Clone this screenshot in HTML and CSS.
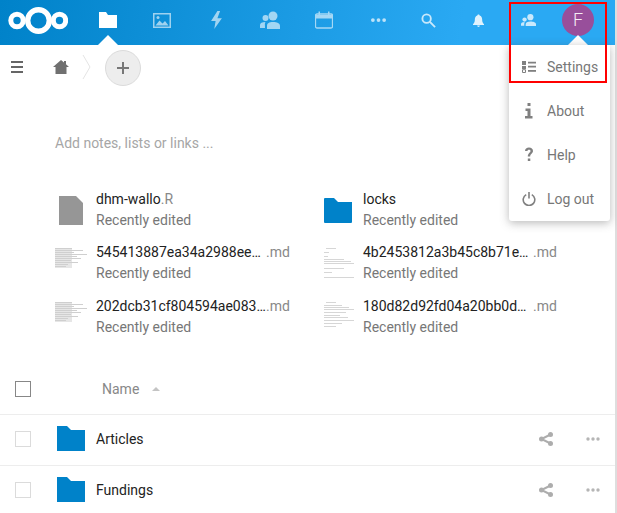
FILE: index.html
```html
<!DOCTYPE html>
<html lang="en">
  <head>
    <meta charset="UTF-8" />
    <title>Files</title>
    <link rel="stylesheet" href="styles.css">
  </head>
  <body>
    <header class="topbar">
      <svg class="logo" viewBox="0 0 60 27" width="60" height="27">
        <g fill="none" stroke="#fff">
          <circle cx="9" cy="13.500" r="6.200" stroke-width="5" />
          <circle cx="30.500" cy="13.500" r="10.800" stroke-width="5.400" />
          <circle cx="51.500" cy="13.500" r="6.200" stroke-width="5" />
        </g>
      </svg>

      <nav class="apps">
        <a class="app active">
          <svg viewBox="0 0 18 16" width="18" height="16"><path d="M0 0h7l2 3h9v13H0z" fill="#fff" /></svg>
        </a>
        <a class="app">
          <svg viewBox="0 0 18 16" width="18" height="16"><path d="M0 1h18v15H0zM1.500 2.500v12h15v-12z" fill="#fff" fill-rule="evenodd" /><path d="M2.500 13.500l4-5 3 3 2.500-2.500 3.500 4.500z" fill="#fff" /><circle cx="5" cy="5.500" r="1.500" fill="#fff" /></svg>
        </a>
        <a class="app">
          <svg viewBox="0 0 14 20" width="13" height="18"><path d="M8 0L1 11h5l-1.500 9L13 8H8l3-8z" fill="#fff" /></svg>
        </a>
        <a class="app">
          <svg viewBox="0 0 20 18" width="20" height="18"><circle cx="13" cy="5" r="4.500" fill="#fff" /><circle cx="5.500" cy="7" r="3" fill="#fff" /><path d="M7 18v-3c0-3 2-4 6-4s7 1 7 4v3zM0 17v-3c0-2 2-3 5.500-3-1 1-.5 3-.5 6z" fill="#fff" /></svg>
        </a>
        <a class="app">
          <svg viewBox="0 0 18 18" width="18" height="18"><path d="M2 3h14a1.500 1.500 0 0 1 1.500 1.500v11A1.500 1.500 0 0 1 16 17H2a1.500 1.500 0 0 1-1.500-1.500v-11A1.500 1.500 0 0 1 2 3z" fill="none" stroke="#fff" stroke-width="1.300" /><path d="M1 4h16v3.500H1zM3.500 0.500h1.500v4H3.500zM13 0.500h1.500v4H13z" fill="#fff" /></svg>
        </a>
        <a class="app small">
          <svg viewBox="0 0 16 4" width="15" height="4"><circle cx="2" cy="2" r="2" fill="#fff" /><circle cx="8" cy="2" r="2" fill="#fff" /><circle cx="14" cy="2" r="2" fill="#fff" /></svg>
        </a>
      </nav>

      <div class="tools">
        <a class="tool search">
          <svg viewBox="0 0 16 16" width="15" height="15"><circle cx="6" cy="6" r="4.500" fill="none" stroke="#fff" stroke-width="2" /><path d="M9.500 9.500L15 15" stroke="#fff" stroke-width="2" /></svg>
        </a>
        <a class="tool bell">
          <svg viewBox="0 0 12 14" width="11" height="13"><path d="M6 0.500c-.8 0-1.200.5-1.200 1.100C2.800 2.200 2 3.800 2 6c0 2.500-.6 4-2 5v.8h12V11c-1.400-1-2-2.500-2-5 0-2.200-.8-3.800-2.800-4.400C7.200 1 6.800.5 6 .5zM4.500 12.500a1.500 1.500 0 0 0 3 0z" fill="#fff" /></svg>
        </a>
        <a class="tool contacts">
          <svg viewBox="0 0 16 13" width="15" height="14"><circle cx="10" cy="3.500" r="3.300" fill="#fff" /><circle cx="3.800" cy="6" r="2.300" fill="#fff" /><path d="M5 13v-2c0-2.200 2-3 5-3s6 .8 6 3v2zM0 12.500V11c0-1.500 1.500-2.300 4-2.300-.5.800-.5 2.300-.5 3.800z" fill="#fff" /></svg>
        </a>
        <a class="avatar">F</a>
      </div>
    </header>

    <main class="content">
      <div class="controls">
        <a class="burger"><span></span><span></span><span></span></a>
        <svg class="home" viewBox="0 0 16 14" width="16" height="14"><path d="M8 0l3 2.500V1h2v3.200L16 7h-2.500v7h-11V7H0z" fill="#707070" /></svg>
        <svg class="crumb" viewBox="0 0 9 24" width="9" height="24"><path d="M1 0l7 12-7 12" fill="none" stroke="#e4e4e4" /></svg>
        <button class="add">
          <svg viewBox="0 0 12 12" width="12" height="12"><path d="M5 0h2v5h5v2H7v5H5V7H0V5h5z" fill="#777" /></svg>
        </button>
      </div>

      <p class="notes">Add notes, lists or links ...</p>

      <section class="recent">
        <div class="recent-item">
          <svg class="recent-icon file-glyph" viewBox="0 0 24 29" width="24" height="29"><path d="M0 0h17l7 7v22H0z" fill="#969696" /></svg>
          <div class="recent-text">
            <div class="recent-name">dhm-wallo<span class="ext">.R</span></div>
            <div class="recent-date">Recently edited</div>
          </div>
        </div>
        <div class="recent-item">
          <svg class="recent-icon folder-glyph" viewBox="0 0 28 25" width="28" height="25"><path d="M0 1a1 1 0 0 1 1-1h9l4 4h14v20a1 1 0 0 1-1 1H1a1 1 0 0 1-1-1z" fill="#0082c9" /></svg>
          <div class="recent-text">
            <div class="recent-name">locks</div>
            <div class="recent-date">Recently edited</div>
          </div>
        </div>
        <div class="recent-item">
          <svg class="thumb" viewBox="0 0 32 30" width="32" height="30"><rect width="17" height="20" fill="#e6e6e6" /><path d="M0 .5h17M0 2.500h28M0 4.500h19M0 6.500h32M0 8.500h22M0 10.500h26M0 12.500h16M0 14.500h23M0 16.500h13M0 18.500h11" stroke="#cfcfcf" /></svg>
          <div class="recent-text">
            <div class="recent-name"><span class="stem">545413887ea34a2988ee…</span><span class="ext">.md</span></div>
            <div class="recent-date">Recently edited</div>
          </div>
        </div>
        <div class="recent-item">
          <svg class="thumb" viewBox="0 0 32 30" width="32" height="30"><path d="M4 .5h10M2 4.500h5M2 8.500h4M2 11.500h20M2 13.500h27M2 15.500h30M2 20.500h20M2 24.500h8M2 29.500h30" stroke="#d6d6d6" /></svg>
          <div class="recent-text">
            <div class="recent-name"><span class="stem">4b2453812a3b45c8b71e…</span><span class="ext">.md</span></div>
            <div class="recent-date">Recently edited</div>
          </div>
        </div>
        <div class="recent-item">
          <svg class="thumb" viewBox="0 0 32 30" width="32" height="30"><rect width="17" height="20" fill="#e6e6e6" /><path d="M0 .5h17M0 2.500h28M0 4.500h19M0 6.500h32M0 8.500h22M0 10.500h26M0 12.500h16M0 14.500h23M0 16.500h13M0 18.500h11" stroke="#cfcfcf" /></svg>
          <div class="recent-text">
            <div class="recent-name"><span class="stem">202dcb31cf804594ae083…</span><span class="ext">.md</span></div>
            <div class="recent-date">Recently edited</div>
          </div>
        </div>
        <div class="recent-item">
          <svg class="thumb" viewBox="0 0 32 30" width="32" height="30"><path d="M4 .5h10M2 3.500h18M2 5.500h25M2 7.500h30M2 10.500h22M2 13.500h16M2 15.500h24M2 18.500h30M2 21.500h18M2 24.500h12" stroke="#d6d6d6" /></svg>
          <div class="recent-text">
            <div class="recent-name"><span class="stem">180d82d92fd04a20bb0d…</span><span class="ext">.md</span></div>
            <div class="recent-date">Recently edited</div>
          </div>
        </div>
      </section>

      <div class="file-head">
        <span class="check head-check"></span>
        <span class="head-name">Name</span>
        <span class="sort"></span>
      </div>
      <div class="file-row">
        <span class="check"></span>
        <svg class="file-icon" viewBox="0 0 28 25" width="28" height="25"><path d="M0 0h10l4 4h14v21H0z" fill="#0082c9" /></svg>
        <span class="file-name">Articles</span>
        <svg class="share" viewBox="0 0 14 14" width="14" height="14"><circle cx="2.500" cy="7" r="2.500" fill="#adadad" /><circle cx="11.500" cy="2.500" r="2.500" fill="#adadad" /><circle cx="11.500" cy="11.500" r="2.500" fill="#adadad" /><path d="M11.500 2.500L2.500 7l9 4.500" fill="none" stroke="#adadad" stroke-width="2" /></svg>
        <svg class="more" viewBox="0 0 14 4" width="14" height="4"><circle cx="2" cy="2" r="1.700" fill="#b5b5b5" /><circle cx="7" cy="2" r="1.700" fill="#b5b5b5" /><circle cx="12" cy="2" r="1.700" fill="#b5b5b5" /></svg>
      </div>
      <div class="file-row">
        <span class="check"></span>
        <svg class="file-icon" viewBox="0 0 28 25" width="28" height="25"><path d="M0 0h10l4 4h14v21H0z" fill="#0082c9" /></svg>
        <span class="file-name">Fundings</span>
        <svg class="share" viewBox="0 0 14 14" width="14" height="14"><circle cx="2.500" cy="7" r="2.500" fill="#adadad" /><circle cx="11.500" cy="2.500" r="2.500" fill="#adadad" /><circle cx="11.500" cy="11.500" r="2.500" fill="#adadad" /><path d="M11.500 2.500L2.500 7l9 4.500" fill="none" stroke="#adadad" stroke-width="2" /></svg>
        <svg class="more" viewBox="0 0 14 4" width="14" height="4"><circle cx="2" cy="2" r="1.700" fill="#b5b5b5" /><circle cx="7" cy="2" r="1.700" fill="#b5b5b5" /><circle cx="12" cy="2" r="1.700" fill="#b5b5b5" /></svg>
      </div>
    </main>

    <!-- 사용자 메뉴 -->
    <div class="menu">
      <a class="menu-item">
        <svg viewBox="0 0 14 12" width="14" height="12"><path d="M0 0h4v4H0zM6 .8h8v1.800H6zM6 4.800h8v1.800H6zM0 5h4v3H0z" fill="#808080" /><path d="M.5 8.700h3v2.800h-3z" fill="none" stroke="#808080" /><path d="M6 9h8v1.800H6z" fill="#808080" /></svg>
        <span>Settings</span>
      </a>
      <a class="menu-item">
        <svg viewBox="0 0 10 16" width="10" height="16"><path d="M3.500 0h3v3h-3zM1.500 5.500h5V13h2v2.500H1V13h2.500V8h-2z" fill="#808080" /></svg>
        <span>About</span>
      </a>
      <a class="menu-item">
        <svg viewBox="0 0 10 16" width="10" height="16"><path d="M1 4c0-2 1.700-3.500 4-3.500S9 2 9 4c0 2.500-2.800 2.700-2.800 5.500H3.800C3.800 6 6.500 5.800 6.500 4c0-.8-.6-1.300-1.500-1.300S3.500 3.200 3.500 4zM3.800 11.500h2.500V14H3.800z" fill="#808080" /></svg>
        <span>Help</span>
      </a>
      <a class="menu-item">
        <svg viewBox="0 0 14 14" width="14" height="14"><path d="M4.200 2.600a5.800 5.800 0 1 0 5.600 0" fill="none" stroke="#808080" stroke-width="1.600" /><path d="M6.200 0h1.600v6.500H6.200z" fill="#808080" /></svg>
        <span>Log out</span>
      </a>
    </div>

    <!-- 강조 표시 -->
    <div class="highlight"></div>
  </body>
</html>
```

FILE: styles.css
```css
html,
body {
  height: 100%;
}

body {
  font-family: Roboto, "Liberation Sans", sans-serif;
  font-size: 14px;
  margin: 0;
  padding: 0;
  overflow: hidden;
  box-sizing: border-box;
  border-right: 2px solid #dedede;
  background-color: white;
  color: #222;
}

.topbar {
  display: flex;
  align-items: center;
  height: 45px;
  background: linear-gradient(100deg, #0082c9 0%, #2aa9f3 75%, #2aa9f3 100%);
}

.logo {
  margin-left: 8px;
  margin-top: -4px;
  flex: none;
}

.apps {
  display: flex;
  margin-left: 13px;
}

.app {
  position: relative;
  display: flex;
  align-items: center;
  justify-content: center;
  width: 54px;
  height: 45px;
  opacity: 0.6;
}

.app svg {
  margin-top: -5px;
}

.app.active {
  opacity: 1;
}

.app.active::after {
  content: "";
  position: absolute;
  bottom: 0;
  left: 50%;
  margin-left: -10px;
  border: 10px solid transparent;
  border-top: 0;
  border-bottom-color: white;
}

.app.small {
  opacity: 0.7;
}

.tools {
  display: flex;
  align-items: center;
  margin-left: -2px;
}

.tool {
  display: flex;
  align-items: center;
  justify-content: center;
  width: 50px;
  height: 45px;
  opacity: 0.75;
}

.tool svg {
  margin-top: -5px;
}

.tool.bell {
  opacity: 0.85;
}

.avatar {
  position: relative;
  width: 32px;
  height: 32px;
  margin-left: 9px;
  margin-top: -5px;
  border-radius: 50%;
  background-color: #984f9b;
  color: #f5ecf5;
  font-size: 18px;
  font-weight: 300;
  line-height: 32px;
  text-align: center;
}

.avatar::after {
  content: "";
  position: absolute;
  top: 31px;
  left: 50%;
  margin-left: -10px;
  border: 10px solid transparent;
  border-top: 0;
  border-bottom-color: white;
}

.controls {
  display: flex;
  align-items: center;
  height: 44px;
  padding-left: 11px;
}

.burger {
  display: flex;
  flex-direction: column;
  gap: 3px;
  width: 12px;
}

.burger span {
  height: 2px;
  background-color: #666;
}

.home {
  margin-left: 30px;
}

.crumb {
  margin-left: 13px;
}

.add {
  display: flex;
  align-items: center;
  justify-content: center;
  width: 36px;
  height: 36px;
  margin-left: 14px;
  margin-top: 2px;
  padding: 0;
  border: 1px solid #dbdbdb;
  border-radius: 50%;
  background-color: #ededed;
}

.notes {
  margin: 0;
  padding: 45px 0 0 55px;
  height: 18px;
  line-height: 18px;
  color: #a6a6a6;
}

.recent {
  display: grid;
  grid-template-columns: 267px 230px;
  grid-template-rows: 53px 54px 54px;
  margin: 35px 0 0 55px;
}

.recent-item {
  display: flex;
  align-items: center;
  height: 46px;
}

.recent-text {
  line-height: 21px;
}

.recent-name {
  display: flex;
  color: #222;
}

.stem {
  width: 170px;
}

.ext {
  color: #888;
}

.recent-date {
  color: #777;
}

.file-glyph {
  flex: none;
  margin-left: 4px;
  margin-right: 13px;
}

.folder-glyph {
  flex: none;
  margin-left: 2px;
  margin-right: 11px;
}

.thumb {
  flex: none;
  margin-right: 9px;
}

.file-head {
  display: flex;
  align-items: center;
  height: 49px;
  margin-top: 16px;
  padding-left: 15px;
  padding-bottom: 1px;
  border-bottom: 1px solid #ededed;
}

.check {
  flex: none;
  width: 14px;
  height: 14px;
  border: 1px solid #dbdbdb;
}

.head-check {
  border-color: #878787;
}

.head-name {
  margin-left: 71px;
  color: #888;
}

.sort {
  width: 0;
  height: 0;
  margin-left: 13px;
  border: 4px solid transparent;
  border-top: 0;
  border-bottom: 4px solid #c4c4c4;
}

.file-row {
  display: flex;
  align-items: center;
  height: 47px;
  padding-left: 15px;
  padding-bottom: 3px;
  border-bottom: 1px solid #ededed;
}

.file-icon {
  flex: none;
  margin-left: 26px;
}

.file-name {
  flex: 1;
  margin-left: 11px;
  color: #222;
}

.share {
  flex: none;
}

.more {
  flex: none;
  margin-left: 33px;
  margin-right: 15px;
}

.menu {
  position: absolute;
  top: 45px;
  left: 509px;
  width: 101px;
  padding: 0;
  background-color: white;
  border-radius: 0 0 3px 3px;
  box-shadow: 0 2px 10px rgba(77, 77, 77, 0.4);
}

.menu-item {
  display: flex;
  align-items: center;
  height: 44px;
  color: #777;
}

.menu-item svg {
  flex: none;
  width: 14px;
  margin-left: 13px;
}

.menu-item span {
  margin-left: 11px;
}

.highlight {
  position: absolute;
  top: 2px;
  left: 509px;
  width: 94px;
  height: 77px;
  border: 2px solid #f00;
}
```
